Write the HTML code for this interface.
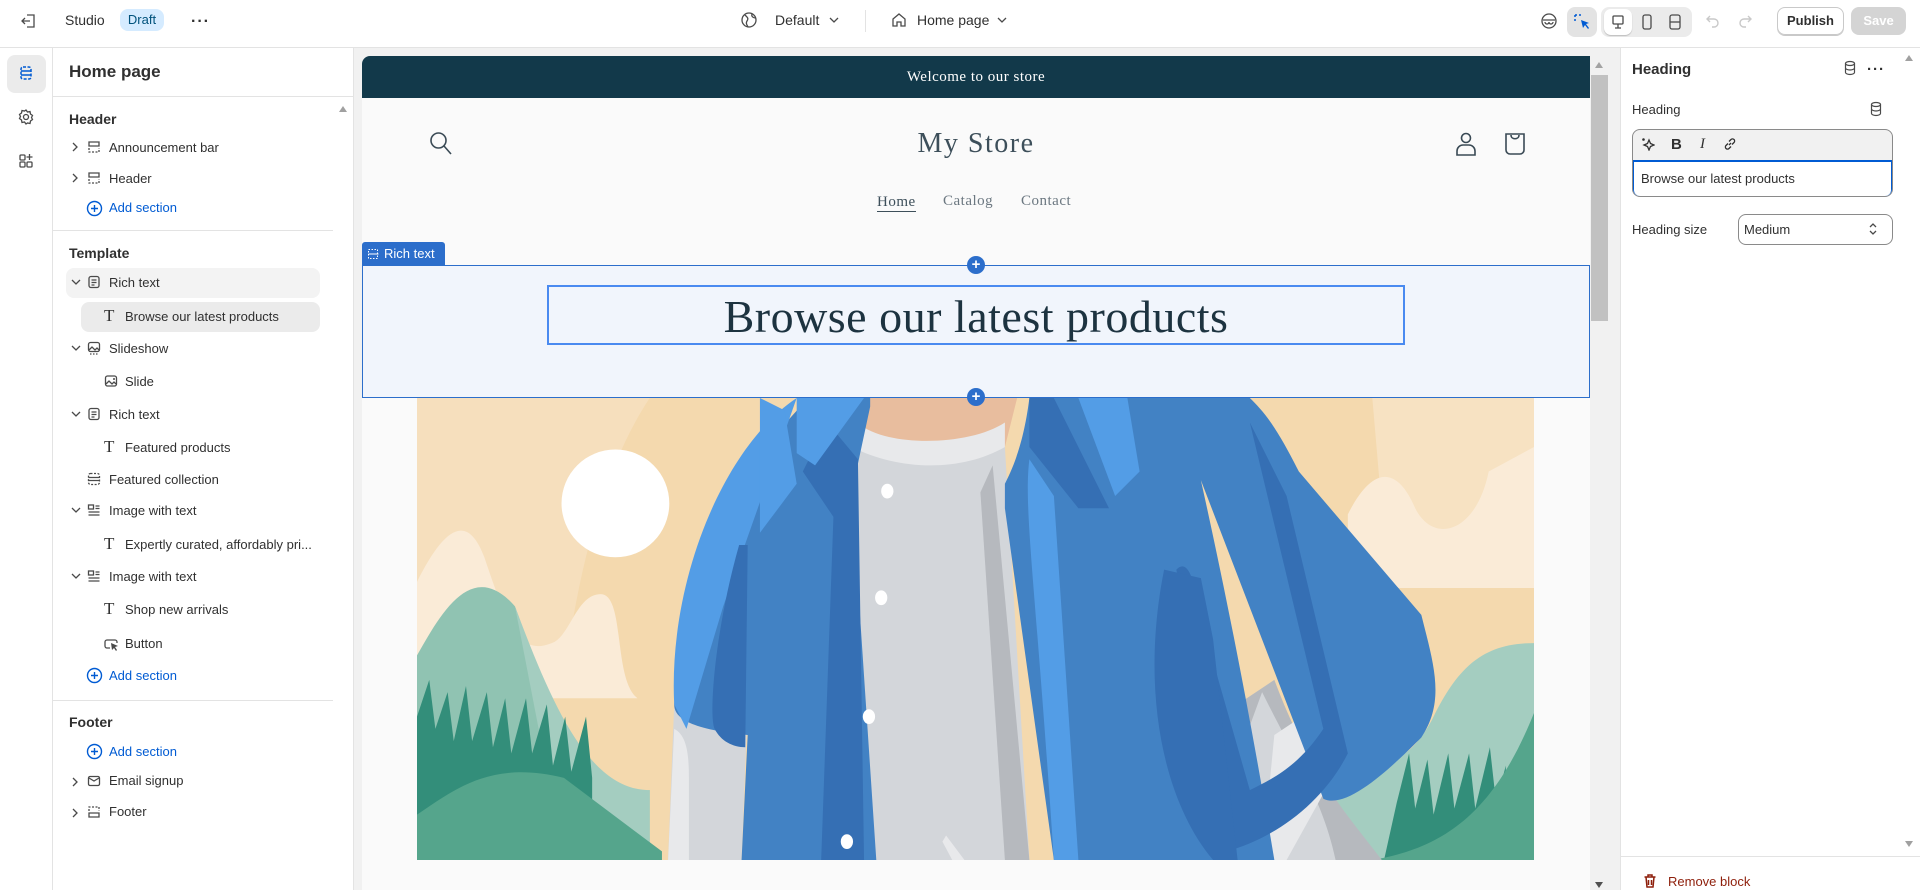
<!DOCTYPE html>
<html><head><meta charset="utf-8"><style>
*{box-sizing:border-box;margin:0;padding:0}
body{width:1920px;height:890px;overflow:hidden;background:#fff;font-family:"Liberation Sans",sans-serif;color:#303030;position:relative}
.a{position:absolute}
.t{font-size:13px;white-space:nowrap}
svg{display:block}
.ic{stroke:#4a4a4a;fill:none;stroke-width:1.3}
</style></head><body>
<!-- top bar -->
<div class="a" style="left:0;top:0;width:1920px;height:48px;border-bottom:1px solid #e3e3e3;background:#fff"></div>
<svg class="a" style="left:20px;top:12px" width="18" height="18" viewBox="0 0 18 18"><path class="ic" d="M7 3h7v12H7M10 9H2M5 6L2 9l3 3"/></svg>
<div class="a t" style="left:65px;top:12px;font-size:14px">Studio</div>
<div class="a t" style="left:120px;top:9px;width:44px;height:22px;border-radius:8px;background:#d5ebff;color:#00527c;font-size:13px;line-height:22px;text-align:center">Draft</div>
<div class="a t" style="left:191px;top:13px;font-size:16px;font-weight:bold;letter-spacing:1px">···</div>
<svg class="a" style="left:740px;top:11px" width="18" height="18" viewBox="0 0 18 18"><circle class="ic" cx="9" cy="9" r="7"/><path class="ic" d="M5 4c2 2 4 3 2 6s1 5 1 6M12 3c-1 3 2 4 4 4"/></svg>
<div class="a t" style="left:775px;top:12px;font-size:14px">Default</div>
<svg class="a" style="left:828px;top:15px" width="12" height="10" viewBox="0 0 12 10"><path class="ic" d="M2 3l4 4 4-4"/></svg>
<div class="a" style="left:865px;top:10px;width:1px;height:22px;background:#e3e3e3"></div>
<svg class="a" style="left:890px;top:11px" width="18" height="18" viewBox="0 0 18 18"><path class="ic" d="M3 8l6-5 6 5v7H11v-4H7v4H3z"/></svg>
<div class="a t" style="left:917px;top:12px;font-size:14px">Home page</div>
<svg class="a" style="left:996px;top:15px" width="12" height="10" viewBox="0 0 12 10"><path class="ic" d="M2 3l4 4 4-4"/></svg>
<svg class="a" style="left:1539px;top:11px" width="20" height="20" viewBox="0 0 20 20"><circle class="ic" cx="10" cy="10" r="7"/><path class="ic" d="M4 9h12M6 11a2 2 0 104 0M10 11a2 2 0 104 0"/></svg>
<div class="a" style="left:1567px;top:7px;width:30px;height:30px;border-radius:8px;background:#e3e3e3"></div>
<svg class="a" style="left:1573px;top:13px" width="18" height="18" viewBox="0 0 18 18"><path d="M2 2h8M2 2v8" stroke="#005bd3" stroke-dasharray="2 2" fill="none" stroke-width="1.5"/><path d="M8 7l8 3-3 1 3 4-1 1-3-4-2 3z" fill="#005bd3"/></svg>
<div class="a" style="left:1601px;top:7px;width:91px;height:30px;border-radius:8px;background:#ebebeb"></div>
<div class="a" style="left:1604px;top:9px;width:28px;height:26px;border-radius:7px;background:#fff;box-shadow:0 1px 1px rgba(0,0,0,.2)"></div>
<svg class="a" style="left:1609px;top:13px" width="18" height="18" viewBox="0 0 18 18"><rect class="ic" x="4" y="3" width="10" height="8" rx="1" stroke="#303030" stroke-width="1.6"/><path class="ic" d="M9 11v4M6 15h6" stroke="#303030" stroke-width="1.6"/></svg>
<svg class="a" style="left:1638px;top:13px" width="18" height="18" viewBox="0 0 18 18"><rect class="ic" x="5" y="2" width="8" height="14" rx="2"/></svg>
<svg class="a" style="left:1666px;top:13px" width="18" height="18" viewBox="0 0 18 18"><rect class="ic" x="4" y="2" width="10" height="14" rx="2"/><path class="ic" d="M4 9h10"/></svg>
<svg class="a" style="left:1704px;top:12px" width="18" height="18" viewBox="0 0 18 18"><path d="M6 4L3 7l3 3M3 7h7a4 4 0 010 8H8" stroke="#c9c9c9" fill="none" stroke-width="1.4"/></svg>
<svg class="a" style="left:1736px;top:12px" width="18" height="18" viewBox="0 0 18 18"><path d="M12 4l3 3-3 3M15 7H8a4 4 0 000 8h2" stroke="#c9c9c9" fill="none" stroke-width="1.4"/></svg>
<div class="a t" style="left:1777px;top:7px;width:67px;height:28px;border:1px solid #c9c9c9;border-radius:8px;font-size:13px;font-weight:bold;line-height:26px;text-align:center;box-shadow:0 1px 0 #c9c9c9">Publish</div>
<div class="a t" style="left:1851px;top:7px;width:55px;height:28px;background:#d4d4d4;border-radius:8px;color:#fff;font-size:13px;font-weight:bold;line-height:28px;text-align:center">Save</div>

<!-- rail -->
<div class="a" style="left:52px;top:48px;width:1px;height:842px;background:#e3e3e3"></div>
<div class="a" style="left:7px;top:55px;width:39px;height:38px;border-radius:8px;background:#ebebeb"></div>
<svg class="a" style="left:17px;top:64px" width="18" height="18" viewBox="0 0 18 18"><rect x="4" y="3" width="10" height="12" rx="2" fill="none" stroke="#005bd3" stroke-width="1.5" stroke-dasharray="3 1.5"/><path d="M4 7h10M4 11h10" stroke="#005bd3" stroke-width="1.5"/></svg>
<svg class="a" style="left:17px;top:108px" width="18" height="18" viewBox="0 0 18 18"><circle class="ic" cx="9" cy="9" r="2.5"/><path class="ic" d="M9 2l1.5 2 2.5-.5.5 2.5 2 1.5-1 2 1 2-2 1.5-.5 2.5-2.5-.5L9 16l-1.5-2-2.5.5-.5-2.5-2-1.5 1-2-1-2 2-1.5.5-2.5 2.5.5z"/></svg>
<svg class="a" style="left:17px;top:152px" width="18" height="18" viewBox="0 0 18 18"><rect class="ic" x="3" y="3" width="5" height="5" rx="1"/><rect class="ic" x="3" y="10" width="5" height="5" rx="1"/><rect class="ic" x="10" y="10" width="5" height="5" rx="1"/><path class="ic" d="M12.5 2v6M9.5 5h6"/></svg>

<!-- left panel -->
<div class="a" style="left:353px;top:48px;width:1px;height:842px;background:#e3e3e3"></div>
<div class="a t" style="left:69px;top:62px;font-size:17px;font-weight:bold;color:#303030">Home page</div>
<div class="a" style="left:53px;top:96px;width:300px;height:1px;background:#e3e3e3"></div>
<div class="a" style="left:339px;top:106px;width:0;height:0;border-left:4px solid transparent;border-right:4px solid transparent;border-bottom:6px solid #a0a0a0"></div>
<div class="a t" style="left:69px;top:111px;font-size:14px;font-weight:bold">Header</div>
<div class="a" style="left:53px;top:230px;width:280px;height:1px;background:#e3e3e3"></div>
<div class="a t" style="left:69px;top:245px;font-size:14px;font-weight:bold">Template</div>
<div class="a" style="left:66px;top:268px;width:254px;height:30px;border-radius:8px;background:#f3f3f3"></div>
<div class="a" style="left:81px;top:302px;width:239px;height:30px;border-radius:8px;background:#ebebeb"></div>
<div class="a" style="left:53px;top:700px;width:280px;height:1px;background:#e3e3e3"></div>
<div class="a t" style="left:69px;top:714px;font-size:14px;font-weight:bold">Footer</div>

<svg class="a" style="left:70px;top:140px" width="10" height="14" viewBox="0 0 10 14"><path class="ic" d="M3 3l4 4-4 4"/></svg>
<svg class="a" style="left:86px;top:139px" width="16" height="16" viewBox="0 0 16 16"><path class="ic" d="M3 9v4h10V9" stroke-dasharray="2 1.5"/><path class="ic" d="M3 3h10v4H3z"/></svg>
<div class="a t" style="left:109px;top:140px">Announcement bar</div>
<svg class="a" style="left:70px;top:171px" width="10" height="14" viewBox="0 0 10 14"><path class="ic" d="M3 3l4 4-4 4"/></svg>
<svg class="a" style="left:86px;top:170px" width="16" height="16" viewBox="0 0 16 16"><path class="ic" d="M3 3h10v4H3z"/><path class="ic" d="M3 9v4h10V9" stroke-dasharray="2 1.5"/></svg>
<div class="a t" style="left:109px;top:171px">Header</div>
<svg class="a" style="left:86px;top:200px" width="17" height="17" viewBox="0 0 17 17"><circle cx="8.5" cy="8.5" r="7" fill="none" stroke="#005bd3" stroke-width="1.4"/><path d="M8.5 5v7M5 8.5h7" stroke="#005bd3" stroke-width="1.4"/></svg>
<div class="a t" style="left:109px;top:200px;color:#005bd3">Add section</div>

<svg class="a" style="left:70px;top:276px" width="12" height="12" viewBox="0 0 12 12"><path class="ic" d="M2 4l4 4 4-4"/></svg>
<svg class="a" style="left:86px;top:274px" width="16" height="16" viewBox="0 0 16 16"><rect class="ic" x="3" y="2.5" width="10" height="11" rx="2"/><path class="ic" d="M5.5 6h5M5.5 8.5h5M5.5 11h3"/></svg>
<div class="a t" style="left:109px;top:275px">Rich text</div>
<div class="a" style="left:104px;top:306px;font-family:'Liberation Serif',serif;font-size:17px">T</div>
<div class="a t" style="left:125px;top:309px">Browse our latest products</div>

<svg class="a" style="left:70px;top:342px" width="12" height="12" viewBox="0 0 12 12"><path class="ic" d="M2 4l4 4 4-4"/></svg>
<svg class="a" style="left:86px;top:340px" width="16" height="16" viewBox="0 0 16 16"><rect class="ic" x="2.5" y="2.5" width="11" height="9" rx="2"/><path class="ic" d="M3 10l3-3 3 3 2-2 2 2"/><path class="ic" d="M4 14h8" stroke-dasharray="1.5 1.5"/></svg>
<div class="a t" style="left:109px;top:341px">Slideshow</div>
<svg class="a" style="left:103px;top:373px" width="16" height="16" viewBox="0 0 16 16"><rect class="ic" x="2.5" y="3" width="11" height="10" rx="2"/><path class="ic" d="M3 11l3-3 3 3 2-2 2 2"/><circle cx="11" cy="6" r="1" fill="#4a4a4a"/></svg>
<div class="a t" style="left:125px;top:374px">Slide</div>

<svg class="a" style="left:70px;top:408px" width="12" height="12" viewBox="0 0 12 12"><path class="ic" d="M2 4l4 4 4-4"/></svg>
<svg class="a" style="left:86px;top:406px" width="16" height="16" viewBox="0 0 16 16"><rect class="ic" x="3" y="2.5" width="10" height="11" rx="2"/><path class="ic" d="M5.5 6h5M5.5 8.5h5M5.5 11h3"/></svg>
<div class="a t" style="left:109px;top:407px">Rich text</div>
<div class="a" style="left:104px;top:437px;font-family:'Liberation Serif',serif;font-size:17px">T</div>
<div class="a t" style="left:125px;top:440px">Featured products</div>

<svg class="a" style="left:86px;top:471px" width="16" height="16" viewBox="0 0 16 16"><rect class="ic" x="2.5" y="2.5" width="11" height="11" rx="2" stroke-dasharray="2 1.5"/><path class="ic" d="M2.5 6.5h11M2.5 9.5h11"/></svg>
<div class="a t" style="left:109px;top:472px">Featured collection</div>

<svg class="a" style="left:70px;top:504px" width="12" height="12" viewBox="0 0 12 12"><path class="ic" d="M2 4l4 4 4-4"/></svg>
<svg class="a" style="left:86px;top:502px" width="16" height="16" viewBox="0 0 16 16"><rect class="ic" x="2.5" y="3" width="5" height="4"/><path class="ic" d="M9.5 4h4M9.5 6.5h4M2.5 10h11M2.5 13h11"/></svg>
<div class="a t" style="left:109px;top:503px">Image with text</div>
<div class="a" style="left:104px;top:534px;font-family:'Liberation Serif',serif;font-size:17px">T</div>
<div class="a t" style="left:125px;top:537px">Expertly curated, affordably pri...</div>

<svg class="a" style="left:70px;top:570px" width="12" height="12" viewBox="0 0 12 12"><path class="ic" d="M2 4l4 4 4-4"/></svg>
<svg class="a" style="left:86px;top:568px" width="16" height="16" viewBox="0 0 16 16"><rect class="ic" x="2.5" y="3" width="5" height="4"/><path class="ic" d="M9.5 4h4M9.5 6.5h4M2.5 10h11M2.5 13h11"/></svg>
<div class="a t" style="left:109px;top:569px">Image with text</div>
<div class="a" style="left:104px;top:599px;font-family:'Liberation Serif',serif;font-size:17px">T</div>
<div class="a t" style="left:125px;top:602px">Shop new arrivals</div>
<svg class="a" style="left:103px;top:636px" width="16" height="16" viewBox="0 0 16 16"><path class="ic" d="M7 12H4a2 2 0 01-2-2V6a2 2 0 012-2h8a2 2 0 012 2v1"/><path d="M8 7l7 3-3 1 2 3-1 1-2-3-2 2z" fill="#4a4a4a"/></svg>
<div class="a t" style="left:125px;top:636px">Button</div>
<svg class="a" style="left:86px;top:667px" width="17" height="17" viewBox="0 0 17 17"><circle cx="8.5" cy="8.5" r="7" fill="none" stroke="#005bd3" stroke-width="1.4"/><path d="M8.5 5v7M5 8.5h7" stroke="#005bd3" stroke-width="1.4"/></svg>
<div class="a t" style="left:109px;top:668px;color:#005bd3">Add section</div>

<svg class="a" style="left:86px;top:743px" width="17" height="17" viewBox="0 0 17 17"><circle cx="8.5" cy="8.5" r="7" fill="none" stroke="#005bd3" stroke-width="1.4"/><path d="M8.5 5v7M5 8.5h7" stroke="#005bd3" stroke-width="1.4"/></svg>
<div class="a t" style="left:109px;top:744px;color:#005bd3">Add section</div>
<svg class="a" style="left:70px;top:775px" width="10" height="14" viewBox="0 0 10 14"><path class="ic" d="M3 3l4 4-4 4"/></svg>
<svg class="a" style="left:86px;top:773px" width="16" height="16" viewBox="0 0 16 16"><rect class="ic" x="2.5" y="3.5" width="11" height="9" rx="1.5"/><path class="ic" d="M3 5l5 3 5-3"/></svg>
<div class="a t" style="left:109px;top:773px">Email signup</div>
<svg class="a" style="left:70px;top:806px" width="10" height="14" viewBox="0 0 10 14"><path class="ic" d="M3 3l4 4-4 4"/></svg>
<svg class="a" style="left:86px;top:804px" width="16" height="16" viewBox="0 0 16 16"><path class="ic" d="M3 7V3h10v4" stroke-dasharray="2 1.5"/><path class="ic" d="M3 9h10v4H3z"/></svg>
<div class="a t" style="left:109px;top:804px">Footer</div>

<!-- preview area -->
<div class="a" style="left:354px;top:48px;width:1266px;height:842px;background:#f1f1f1"></div>
<div class="a" style="left:362px;top:56px;width:1228px;height:834px;background:#fafafa;border-radius:8px 0 0 0;overflow:hidden">
  <div class="a" style="left:0;top:0;width:1228px;height:42px;background:#12394a;color:#fff;font-family:'Liberation Serif',serif;font-size:15px;text-align:center;line-height:42px;letter-spacing:.5px">Welcome to our store</div>
</div>
<div class="a" style="left:1590px;top:56px;width:19px;height:834px;background:#f1f1f1"></div>
<div class="a" style="left:1591px;top:75px;width:17px;height:246px;background:#c1c1c1"></div>
<div class="a" style="left:1595px;top:62px;width:0;height:0;border-left:4px solid transparent;border-right:4px solid transparent;border-bottom:6px solid #a3a3a3"></div>
<div class="a" style="left:1595px;top:882px;width:0;height:0;border-left:4px solid transparent;border-right:4px solid transparent;border-top:6px solid #505050"></div>

<svg class="a" style="left:429px;top:131px" width="24" height="26" viewBox="0 0 24 26"><circle cx="9.5" cy="9.5" r="7.5" fill="none" stroke="#3a4a55" stroke-width="1.6"/><path d="M15 15l7 8" stroke="#3a4a55" stroke-width="1.6"/></svg>
<div class="a" style="left:876px;top:128px;width:200px;text-align:center;font-family:'Liberation Serif',serif;font-size:28px;color:#3d4f5a;letter-spacing:1.5px">My Store</div>
<svg class="a" style="left:1454px;top:131px" width="24" height="26" viewBox="0 0 24 26"><circle cx="12" cy="7" r="4.5" fill="none" stroke="#3a4a55" stroke-width="1.6"/><path d="M3 24v-4a6 6 0 016-6h6a6 6 0 016 6v4z" fill="none" stroke="#3a4a55" stroke-width="1.6"/></svg>
<svg class="a" style="left:1503px;top:131px" width="24" height="26" viewBox="0 0 24 26"><path d="M3 3h18v16a4 4 0 01-4 4H7a4 4 0 01-4-4z" fill="none" stroke="#3a4a55" stroke-width="1.6"/><path d="M8 4c0 5 8 5 8 0" fill="none" stroke="#3a4a55" stroke-width="1.6"/></svg>
<div class="a" style="left:877px;top:193px;font-family:'Liberation Serif',serif;font-size:15px;color:#3d4f5a;letter-spacing:.5px;border-bottom:1px solid #3d4f5a;line-height:18px">Home</div>
<div class="a" style="left:943px;top:193px;font-family:'Liberation Serif',serif;font-size:15px;color:#6b7780;letter-spacing:.5px">Catalog</div>
<div class="a" style="left:1021px;top:193px;font-family:'Liberation Serif',serif;font-size:15px;color:#6b7780;letter-spacing:.5px">Contact</div>

<!-- illustration -->
<svg class="a" style="left:417px;top:398px" width="1117" height="462" viewBox="0 0 912 377" preserveAspectRatio="none">
<rect width="912" height="377" fill="#f4d9ae"/>
<path d="M60 0h130c-40 60-60 150-70 230H0V0z" fill="#f6dfbd"/>
<path d="M780 0h132v100c-40 20-70 10-120 40z" fill="#f7e2c2"/>
<path d="M0 150c20-40 40-60 55-20 20 60 30 80 55 70 15-5 20-40 40-40 20 0 10 70 30 85H0z" fill="#faebd7"/>
<path d="M760 95c20-40 40-40 55-5 15 30 50 20 60-30l37-20v115H760z" fill="#faebd7"/>
<circle cx="162" cy="86" r="44" fill="#fff"/>
<path d="M0 210c20-35 45-80 80-40 40 110 60 160 110 150l0 57H0z" fill="#90c3b2"/>
<path d="M80 170c30 80 60 150 110 150v57H120z" fill="#a4cdc0"/>
<path d="M740 290c40 20 70 10 90-30 20-40 40-60 82-60v177H700z" fill="#a4cdc0"/>
<path d="M0 260l10-30 5 40 10-30 5 40 10-45 5 45 12-40 5 45 10-40 5 45 12-45 5 45 12-40 5 50 10-40 5 45 12-45 5 50v90H0z" fill="#338e7a"/>
<path d="M800 330l10-40 5 45 10-40 5 45 12-50 5 45 12-45 5 45 12-50 5 45 8-30v120H780z" fill="#338e7a"/>
<path d="M0 340c30-20 60-45 120-30l80 60v7H0z" fill="#55a58c"/>
<path d="M780 377c60-10 100-40 132-120v120z" fill="#55a58c"/>
<path d="M360 0h130l-10 40c-20 25-90 25-110 0z" fill="#e8bd9e"/>
<path d="M360 20c20 20 90 20 120 0l0 25c-30 20-90 20-120 0z" fill="#e8e9eb"/>
<path d="M355 40c40 20 90 20 125 0l20 337H370z" fill="#d3d6da"/>
<path d="M470 55l30 322h-20l-20-300z" fill="#b6b9be"/>
<path d="M700 230c30 80 60 110 90 150H620l20-110z" fill="#b6b9be"/>
<path d="M690 240c30 60 50 90 60 137H640z" fill="#d3d6da"/>
<path d="M700 275l30-20 20 50-40 72h-20z" fill="#e8e9eb"/>
<path d="M210 250h60l-5 127H205z" fill="#d3d6da"/>
<path d="M210 270c10 5 12 20 12 40v67h-17z" fill="#e8e9eb"/>
<path d="M320 0c-60 60-100 140-110 250 0 10 10 20 60 25l-5 102h110l-20-300 15-70 0-7z" fill="#4282c4"/>
<path d="M500 0c-5 40-15 60-20 70l0 20 40 287h180c-20-120-40-220-60-310l100 260c20 10 60-30 80-50 20-30 10-60 0-100L720 60C700 20 690 10 680 0z" fill="#4282c4"/>
<path d="M210 250c-5-100 40-210 100-250l-60 170-30 100z" fill="#539de6"/>
<path d="M500 50c-5 40 5 100 20 327h20L520 80z" fill="#539de6"/>
<path d="M280 0l20 10 10 60-30 40z" fill="#539de6"/>
<path d="M315 60l20-40 25 30 5 327h-35l10-280z" fill="#356fb4"/>
<path d="M500 0l0 40 40 50 25 0L520 0z" fill="#356fb4"/>
<path d="M263 120c-20 70-25 140-20 150 5 10 15 15 25 15l2-165z" fill="#356fb4"/>
<path d="M620 140c10-10 15 10 20 40l40 140c20-10 40-20 60-50L680 20l30 60 50 210c-20 40-60 70-100 80z" fill="#356fb4"/>
<path d="M540 0h40l10 60-20 20z" fill="#539de6"/>
<path d="M310 0h55l-40 55-15-10z" fill="#539de6"/>
<path d="M610 140c-20 100 0 190 40 237h20l-20-180-10-50z" fill="#356fb4"/>
<ellipse cx="384" cy="76" rx="5" ry="6" fill="#fff"/>
<ellipse cx="379" cy="163" rx="5" ry="6" fill="#fff"/>
<ellipse cx="369" cy="260" rx="5" ry="6" fill="#fff"/>
<ellipse cx="351" cy="362" rx="5" ry="6" fill="#fff"/>
<path d="M432 357l15 20h-10l-8-15z" fill="#e8e9eb"/>
</svg>

<!-- rich text selection -->
<div class="a" style="left:362px;top:265px;width:1228px;height:133px;background:rgba(236,242,252,.7);border:1px solid #2c6ecb"></div>
<div class="a" style="left:362px;top:242px;width:83px;height:24px;background:#2c6ecb;border-radius:3px 3px 0 0"></div>
<svg class="a" style="left:367px;top:248px" width="12" height="12" viewBox="0 0 12 12"><rect x="1.5" y="1.5" width="9" height="9" fill="none" stroke="#fff" stroke-dasharray="1.5 1.5"/><path d="M1.5 6h10" stroke="#fff"/></svg>
<div class="a t" style="left:384px;top:246px;color:#fff;font-size:13px">Rich text</div>
<div class="a" style="left:547px;top:285px;width:858px;height:60px;border:2px solid #4a8af0"></div>
<div class="a" style="left:547px;top:290px;width:858px;text-align:center;font-family:'Liberation Serif',serif;font-size:46px;color:#1d3340;letter-spacing:0.5px;white-space:nowrap">Browse our latest products</div>
<div class="a" style="left:967px;top:256px;width:18px;height:18px;border-radius:50%;background:#2c6ecb;color:#fff;font-size:15px;line-height:17px;text-align:center;font-weight:bold">+</div>
<div class="a" style="left:967px;top:388px;width:18px;height:18px;border-radius:50%;background:#2c6ecb;color:#fff;font-size:15px;line-height:17px;text-align:center;font-weight:bold">+</div>

<!-- right panel -->
<div class="a" style="left:1620px;top:48px;width:300px;height:842px;background:#fff;border-left:1px solid #e3e3e3"></div>
<div class="a t" style="left:1632px;top:61px;font-size:15px;font-weight:bold">Heading</div>
<svg class="a" style="left:1843px;top:60px" width="14" height="16" viewBox="0 0 14 16"><ellipse cx="7" cy="3.5" rx="4.5" ry="2" fill="none" stroke="#4a4a4a" stroke-width="1.2"/><path d="M2.5 3.5v9c0 1 2 2 4.5 2s4.5-1 4.5-2v-9M2.5 8c0 1 2 2 4.5 2s4.5-1 4.5-2" fill="none" stroke="#4a4a4a" stroke-width="1.2"/></svg>
<div class="a t" style="left:1867px;top:61px;font-size:15px;font-weight:bold;letter-spacing:1px">···</div>
<div class="a" style="left:1905px;top:55px;width:0;height:0;border-left:4px solid transparent;border-right:4px solid transparent;border-bottom:6px solid #a0a0a0"></div>
<div class="a t" style="left:1632px;top:102px">Heading</div>
<svg class="a" style="left:1869px;top:101px" width="14" height="16" viewBox="0 0 14 16"><ellipse cx="7" cy="3.5" rx="4.5" ry="2" fill="none" stroke="#4a4a4a" stroke-width="1.2"/><path d="M2.5 3.5v9c0 1 2 2 4.5 2s4.5-1 4.5-2v-9M2.5 8c0 1 2 2 4.5 2s4.5-1 4.5-2" fill="none" stroke="#4a4a4a" stroke-width="1.2"/></svg>
<div class="a" style="left:1632px;top:129px;width:261px;height:68px;border:1px solid #8a8a8a;border-radius:8px;background:#f1f1f1;overflow:hidden">
 <div class="a" style="left:-1px;top:30px;width:261px;height:38px;background:#fff;border:2px solid #005bd3;border-radius:0 0 8px 8px"></div>
</div>
<svg class="a" style="left:1641px;top:137px" width="14" height="14" viewBox="0 0 14 14"><path d="M8 3l1.5 3.5L13 8l-3.5 1.5L8 13 6.5 9.5 3 8l3.5-1.5z" fill="none" stroke="#303030" stroke-width="1.3"/><circle cx="2.5" cy="2.5" r="1.3" fill="#303030"/></svg>
<div class="a" style="left:1671px;top:136px;font-size:15px;font-weight:bold">B</div>
<div class="a" style="left:1700px;top:136px;font-size:15px;font-style:italic;font-family:'Liberation Serif',serif">I</div>
<svg class="a" style="left:1723px;top:137px" width="14" height="14" viewBox="0 0 14 14"><path d="M6 8l2-2M5 6.5L3 8.5a2 2 0 003 3l2-2M9 7.5l2-2a2 2 0 00-3-3l-2 2" fill="none" stroke="#303030" stroke-width="1.3"/></svg>
<div class="a t" style="left:1641px;top:171px;font-size:13px">Browse our latest products</div>
<div class="a t" style="left:1632px;top:222px">Heading size</div>
<div class="a" style="left:1738px;top:214px;width:155px;height:31px;border:1px solid #8a8a8a;border-radius:8px"></div>
<div class="a t" style="left:1744px;top:222px">Medium</div>
<svg class="a" style="left:1867px;top:221px" width="12" height="16" viewBox="0 0 12 16"><path class="ic" d="M3 6l3-3 3 3M3 10l3 3 3-3"/></svg>
<div class="a" style="left:1905px;top:841px;width:0;height:0;border-left:4px solid transparent;border-right:4px solid transparent;border-top:6px solid #a0a0a0"></div>
<div class="a" style="left:1620px;top:856px;width:300px;height:1px;background:#e3e3e3"></div>
<svg class="a" style="left:1643px;top:873px" width="14" height="16" viewBox="0 0 14 16"><path d="M1.5 4h11M5 4V2h4v2M3 4l1 10h6l1-10M5.5 7v5M8.5 7v5" fill="none" stroke="#8e1f0b" stroke-width="1.5"/></svg>
<div class="a t" style="left:1668px;top:874px;color:#8e1f0b">Remove block</div>
</body></html>
